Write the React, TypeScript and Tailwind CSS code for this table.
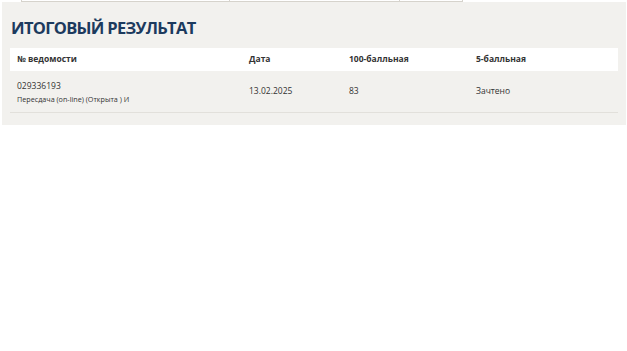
export default function App() {
  const rows = [
    { num: "029336193", type: "Пересдача (on-line) (Открыта ) И", date: "13.02.2025", score: "83", grade: "Зачтено" },
  ];

  return (
    <div className="w-[627px] h-[351px] bg-white font-['Open_Sans',sans-serif] text-[#333]">
      {/* tabs bottom edge */}
      <div className="ml-[21px] flex h-[2px]">
        <div className="w-[209px] border-x border-b border-[#d6d3cc] bg-white" />
        <div className="w-[170px] border-r border-b border-[#d6d3cc] bg-white" />
        <div className="w-[63px] border-r border-b border-[#d6d3cc] bg-white" />
      </div>

      <div className="ml-[2px] w-[624px] bg-[#f2f1ee] px-[8px] pt-[15px] pb-[12px]">
        <h2 className="ml-[1px] text-[16.5px] leading-[22px] font-bold tracking-[-0.7px] text-[#1c3a5e]">
          ИТОГОВЫЙ РЕЗУЛЬТАТ
        </h2>

        <div className="mt-[9px] w-[608px]">
          <div className="grid h-[23px] grid-cols-[232px_100px_127px_1fr] items-center bg-white text-[8.5px] font-bold">
            <div className="pl-[7px]">№ ведомости</div>
            <div className="pl-[7px]">Дата</div>
            <div className="pl-[7px]">100-балльная</div>
            <div className="pl-[7px]">5-балльная</div>
          </div>

          {rows.map((r) => (
            <div
              key={r.num}
              className="grid h-[42px] grid-cols-[232px_100px_127px_1fr] items-center border-b border-[#e2e0db] text-[8.5px]"
            >
              <div className="pl-[7px]">
                <div className="leading-[13px]">{r.num}</div>
                <div className="mt-[1px] text-[7.2px] leading-[12px]">{r.type}</div>
              </div>
              <div className="pl-[7px]">{r.date}</div>
              <div className="pl-[7px]">{r.score}</div>
              <div className="pl-[7px]">{r.grade}</div>
            </div>
          ))}
        </div>
      </div>
    </div>
  );
}
